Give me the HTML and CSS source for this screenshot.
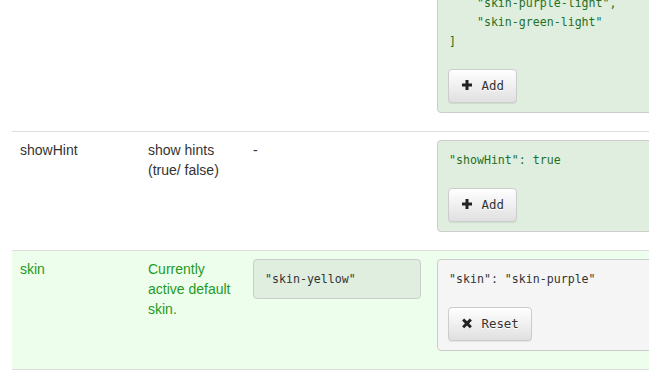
FILE: index.html
```html
<!DOCTYPE html>
<html lang="en">
<head>
  <meta charset="UTF-8" />
  <meta name="viewport" content="width=device-width, initial-scale=1.0">
  <title>Options</title>
  <link rel="stylesheet" href="styles.css">
</head>
<body>
  <div class="page">
    <table class="options">
      <colgroup>
        <col class="col-name">
        <col class="col-desc">
        <col class="col-default">
        <col class="col-example">
      </colgroup>
      <tbody>
        <tr>
          <td></td>
          <td></td>
          <td></td>
          <td>
            <div class="example">
<pre class="code">"skins": [
    "skin-blue",
    "skin-black",
    "skin-red",
    "skin-yellow",
    "skin-purple",
    "skin-green",
    "skin-blue-light",
    "skin-black-light",
    "skin-red-light",
    "skin-yellow-light",
    "skin-purple-light",
    "skin-green-light"
]</pre>
              <button type="button" class="btn">
                <svg class="icon" width="12" height="12" viewBox="0 0 12 12"><path d="M4.5 1h3v3.5H11v3H7.5V11h-3V7.5H1v-3h3.5z"/></svg>
                Add
              </button>
            </div>
          </td>
        </tr>
        <tr>
          <td>showHint</td>
          <td>show hints (true/ false)</td>
          <td>-</td>
          <td>
            <div class="example">
<pre class="code">"showHint": true</pre>
              <button type="button" class="btn">
                <svg class="icon" width="12" height="12" viewBox="0 0 12 12"><path d="M4.5 1h3v3.5H11v3H7.5V11h-3V7.5H1v-3h3.5z"/></svg>
                Add
              </button>
            </div>
          </td>
        </tr>
        <tr class="current">
          <td>skin</td>
          <td>Currently active default skin.</td>
          <td>
            <pre class="value">"skin-yellow"</pre>
          </td>
          <td>
            <div class="example plain">
<pre class="code">"skin": "skin-purple"</pre>
              <button type="button" class="btn">
                <svg class="icon" width="12" height="12" viewBox="0 0 12 12"><path d="M3.2 1.5L6 4.3l2.8-2.8 2.1 2.1L8.1 6.4l2.8 2.8-2.1 2.1L6 8.5l-2.8 2.8-2.1-2.1 2.8-2.8-2.8-2.8z"/></svg>
                Reset
              </button>
            </div>
          </td>
        </tr>
      </tbody>
    </table>
  </div>
</body>
</html>
```

FILE: styles.css
```css
html, body {
  overflow: hidden;
}

body {
  margin: 0;
  background: #fff;
  color: #333;
  font-family: 'Liberation Sans', Arial, sans-serif;
  font-size: 14px;
  line-height: 20px;
}

.page {
  padding-left: 12px;
  margin-top: -229.5px;
}

.options {
  width: 700px;
  table-layout: fixed;
  border-collapse: collapse;
}

.col-name { width: 128px; }
.col-desc { width: 105px; }
.col-default { width: 184px; }

.options td {
  padding: 8px;
  vertical-align: top;
  border-top: 1px solid #ddd;
  border-bottom: 1px solid #ddd;
}

.options tr.current td {
  background: #eefeec;
  color: #1f9a1f;
}

pre {
  margin: 0;
  font-family: 'DejaVu Sans Mono', 'Liberation Mono', monospace;
  font-size: 11.6px;
  line-height: 18.5714px;
  white-space: pre;
}

.value {
  padding: 9.5px 11px;
  background: #e0eee0;
  border: 1px solid #ccc;
  border-radius: 4px;
  color: #333;
}

.example {
  margin-bottom: 10px;
  padding: 9.5px 10px;
  background: #dfeedf;
  border: 1px solid #ccc;
  border-radius: 4px;
}

.example .code {
  margin-bottom: 18.5714px;
  padding-left: 1px;
  color: #1f701f;
}

.example.plain {
  background: #f5f5f5;
}

.example.plain .code {
  color: #333;
}

.btn {
  display: block;
  height: 34px;
  padding: 6px 12px;
  font-family: 'DejaVu Sans Mono', 'Liberation Mono', monospace;
  font-size: 12.4px;
  line-height: 20px;
  color: #333;
  text-shadow: 0 1px 0 #fff;
  background-image: linear-gradient(to bottom, #fff 0, #e0e0e0 100%);
  border: 1px solid #ccc;
  border-radius: 4px;
  box-shadow: inset 0 1px 0 rgba(255,255,255,0.15), 0 1px 1px rgba(0,0,0,0.075);
  cursor: pointer;
}

.icon {
  display: inline-block;
  vertical-align: -1px;
  margin-right: 1px;
  fill: #222;
}
```
